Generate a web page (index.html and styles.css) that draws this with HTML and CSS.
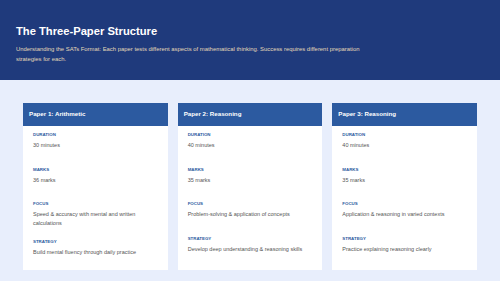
FILE: index.html
```html
<!DOCTYPE html>
<html>
<head>
<meta charset="utf-8">
<link rel="stylesheet" href="styles.css">
</head>
<body>
<header class="hero">
  <h1 class="hero-title">The Three-Paper Structure</h1>
  <p class="hero-sub">Understanding the SATs Format: Each paper tests different aspects of mathematical thinking. Success requires different preparation strategies for each.</p>
</header>
<main class="cards">
  <section class="card">
    <div class="card-head">Paper 1: Arithmetic</div>
    <div class="card-body">
      <div class="item"><div class="label">Duration</div><div class="value">30 minutes</div></div>
      <div class="item"><div class="label">Marks</div><div class="value">36 marks</div></div>
      <div class="item"><div class="label">Focus</div><div class="value">Speed &amp; accuracy with mental and written calculations</div></div>
      <div class="item"><div class="label">Strategy</div><div class="value">Build mental fluency through daily practice</div></div>
    </div>
  </section>
  <section class="card">
    <div class="card-head">Paper 2: Reasoning</div>
    <div class="card-body">
      <div class="item"><div class="label">Duration</div><div class="value">40 minutes</div></div>
      <div class="item"><div class="label">Marks</div><div class="value">35 marks</div></div>
      <div class="item"><div class="label">Focus</div><div class="value">Problem-solving &amp; application of concepts</div></div>
      <div class="item"><div class="label">Strategy</div><div class="value">Develop deep understanding &amp; reasoning skills</div></div>
    </div>
  </section>
  <section class="card">
    <div class="card-head">Paper 3: Reasoning</div>
    <div class="card-body">
      <div class="item"><div class="label">Duration</div><div class="value">40 minutes</div></div>
      <div class="item"><div class="label">Marks</div><div class="value">35 marks</div></div>
      <div class="item"><div class="label">Focus</div><div class="value">Application &amp; reasoning in varied contexts</div></div>
      <div class="item"><div class="label">Strategy</div><div class="value">Practice explaining reasoning clearly</div></div>
    </div>
  </section>
</main>
</body>
</html>
```
FILE: styles.css
```css
* { box-sizing: border-box; margin: 0; padding: 0; }
html, body { width: 500px; height: 281px; overflow: hidden; }
body {
  background: #e8eefc;
  font-family: "Liberation Sans", Arial, sans-serif;
}
.hero {
  height: 80px;
  background: #1f3a7c;
  padding: 24px 16px 0 16px;
}
.hero-title {
  color: #ffffff;
  font-size: 11.2px;
  font-weight: bold;
  line-height: 15px;
  margin-bottom: 6px;
}
.hero-sub {
  color: #e3d9b8;
  font-size: 5.9px;
  line-height: 9.5px;
  width: 362px;
}
.cards {
  display: grid;
  grid-template-columns: repeat(3, 1fr);
  gap: 10px;
  padding: 23px 23px 0 23px;
}
.card {
  background: #ffffff;
  height: 167px;
}
.card-head {
  background: #2c5aa0;
  color: #ffffff;
  font-weight: bold;
  font-size: 6.2px;
  height: 23px;
  line-height: 22px;
  padding-left: 6px;
}
.card-body {
  padding: 6px 10px 0 10px;
}
.item {
  min-height: 24px;
  margin-bottom: 10.5px;
}
.label {
  color: #2c5aa0;
  font-size: 4.4px;
  font-weight: bold;
  text-transform: uppercase;
  line-height: 6px;
  margin-bottom: 3px;
}
.value {
  color: #555555;
  font-size: 5.5px;
  line-height: 9px;
}
```
